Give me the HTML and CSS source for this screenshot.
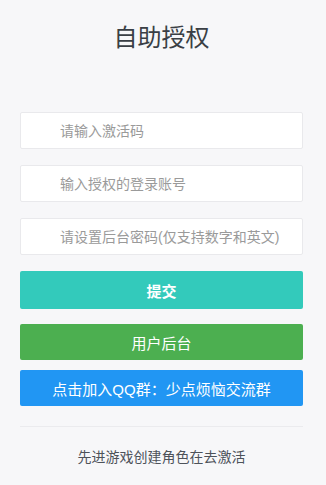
FILE: index.html
```html
<!DOCTYPE html>
<html lang="zh-CN">
<head>
<meta charset="utf-8">
<title>自助授权</title>
<link rel="stylesheet" href="styles.css">
</head>
<body>
<div class="page">
  <h1 class="title">自助授权</h1>
  <form class="form">
    <input class="field" type="text" placeholder="请输入激活码">
    <input class="field" type="text" placeholder="输入授权的登录账号">
    <input class="field" type="text" placeholder="请设置后台密码(仅支持数字和英文)">
    <button class="btn btn-submit" type="button">提交</button>
    <button class="btn btn-user" type="button">用户后台</button>
    <button class="btn btn-qq" type="button">点击加入QQ群：少点烦恼交流群</button>
  </form>
  <hr class="divider">
  <p class="note">先进游戏创建角色在去激活</p>
</div>
</body>
</html>
```
FILE: styles.css
```css
html, body {
  margin: 0;
  padding: 0;
  background: #f7f7f9;
}
body {
  font-family: "Liberation Sans", "Noto Sans CJK SC", sans-serif;
  color: #4d5259;
}
.page {
  padding: 0 23px 0 20px;
}
.title {
  margin: 0;
  padding-top: 24px;
  height: 28px;
  line-height: 28px;
  font-size: 24px;
  font-weight: normal;
  text-align: center;
  color: #3a3f45;
}
.form {
  display: flex;
  flex-direction: column;
  margin-top: 60px;
}
.field {
  box-sizing: border-box;
  height: 37px;
  margin: 0 0 16px 0;
  padding: 0 10px 0 39px;
  border: 1px solid #e9e9ec;
  border-radius: 2px;
  background: #fff;
  font-family: inherit;
  font-size: 14px;
  color: #333;
  outline: none;
}
.field::placeholder {
  color: #9a9a9a;
}
.btn {
  box-sizing: border-box;
  height: 36px;
  border: none;
  border-radius: 2px;
  color: #fff;
  font-family: inherit;
  font-size: 15px;
  padding: 0;
  cursor: pointer;
}
.btn-submit {
  height: 38px;
  background: #33cabb;
  font-weight: bold;
  margin-bottom: 15px;
}
.btn-user {
  background: #4caf50;
  margin-bottom: 10px;
}
.btn-qq {
  background: #2196f3;
}
.divider {
  margin: 20px 0 0 0;
  border: none;
  border-top: 1px solid #ebebee;
  height: 0;
}
.note {
  margin: 20px 0 0 0;
  line-height: 20px;
  font-size: 14px;
  text-align: center;
  color: #4d5259;
}
```
